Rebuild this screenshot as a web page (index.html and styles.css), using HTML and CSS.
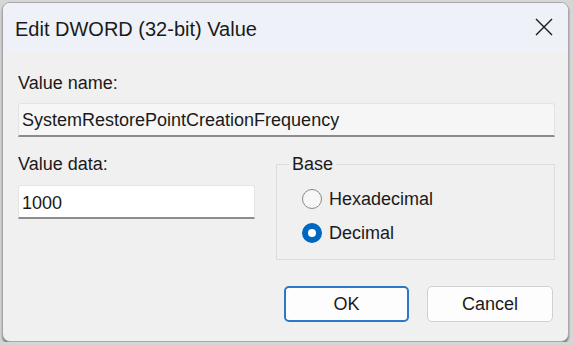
FILE: index.html
```html
<!DOCTYPE html>
<html lang="en">
<head>
    <meta charset="UTF-8">
    <title>Edit DWORD (32-bit) Value</title>
    <link rel="stylesheet" href="styles.css">
</head>
<body>
<div class="window">
    <div class="titlebar">
        <span class="title">Edit DWORD (32-bit) Value</span>
        <svg class="close" width="18" height="18" viewBox="0 0 18 18">
            <path d="M1 1 L17 17 M17 1 L1 17" stroke="#1a1a1a" stroke-width="1.4" fill="none"/>
        </svg>
    </div>
    <div class="content">
        <div class="label">Value name:</div>
        <div class="field readonly">SystemRestorePointCreationFrequency</div>
        <div class="row">
            <div class="data">
                <div class="label">Value data:</div>
                <div class="field input">1000</div>
            </div>
            <fieldset class="base">
                <legend>Base</legend>
                <div class="radio"><span class="dot"></span>Hexadecimal</div>
                <div class="radio"><span class="dot checked"></span>Decimal</div>
            </fieldset>
        </div>
        <div class="buttons">
            <button class="btn default">OK</button>
            <button class="btn">Cancel</button>
        </div>
    </div>
</div>
</body>
</html>
```

FILE: styles.css
```css
body {
    margin: 0;
    background-color: #d6d6d6;
    font-family: "Liberation Sans", Arial, sans-serif;
    color: #1a1a1a;
}
.window {
    box-sizing: border-box;
    width: 567px;
    height: 340px;
    margin: 2px 0 0 2px;
    border: 1px solid #a8a8a8;
    border-radius: 8px;
    background-color: #f0f0f0;
    overflow: hidden;
    box-shadow: 0 2px 2px rgba(0, 0, 0, 0.45);
}
.titlebar {
    display: flex;
    align-items: center;
    height: 49px;
    padding: 4px 0 0 12px;
    box-sizing: border-box;
    background-color: #eef2f8;
}
.title {
    font-size: 20px;
}
.close {
    margin-left: auto;
    margin-right: 15px;
    margin-top: -6px;
}
.content {
    padding: 0 13px 0 15px;
}
.label {
    font-size: 18px;
    line-height: 22px;
}
.content > .label {
    margin-top: 20px;
}
.field {
    box-sizing: border-box;
    font-size: 18px;
    line-height: 22px;
    padding: 5px 3px 0;
    border: 1px solid #e3e3e3;
    border-bottom: 2px solid #8c8c8c;
    border-radius: 3px 3px 0 0;
}
.readonly {
    height: 34px;
    margin-top: 9px;
    background-color: #f6f6f6;
}
.row {
    display: flex;
    gap: 21px;
    margin-top: 16px;
}
.data {
    width: 237px;
}
.input {
    height: 34px;
    margin-top: 10px;
    padding-top: 6px;
    background-color: #ffffff;
}
.base {
    flex: 1;
    margin: 0;
    padding: 7px 0 9px 12px;
    height: 107px;
    box-sizing: border-box;
    border: 1px solid #dcdcdc;
    font-size: 18px;
}
.base legend {
    padding: 0 3px;
    line-height: 22px;
}
.radio {
    display: flex;
    align-items: center;
    height: 34px;
    line-height: 22px;
    padding-left: 13px;
}
.dot {
    box-sizing: border-box;
    width: 20px;
    height: 20px;
    margin-right: 7px;
    border: 1.5px solid #8a8a8a;
    border-radius: 50%;
    background-color: #f7f7f7;
}
.dot.checked {
    border: 6px solid #0067c0;
    background-color: #ffffff;
}
.buttons {
    display: flex;
    justify-content: flex-end;
    gap: 18px;
    margin-top: 26px;
    padding-right: 2px;
}
.btn {
    box-sizing: border-box;
    width: 126px;
    height: 36px;
    font-family: "Liberation Sans", Arial, sans-serif;
    font-size: 18px;
    color: #1a1a1a;
    background-color: #fdfdfd;
    border: 1px solid #d0d0d0;
    border-radius: 5px;
}
.btn.default {
    width: 125px;
    border: 2px solid #2a78c6;
}
```
